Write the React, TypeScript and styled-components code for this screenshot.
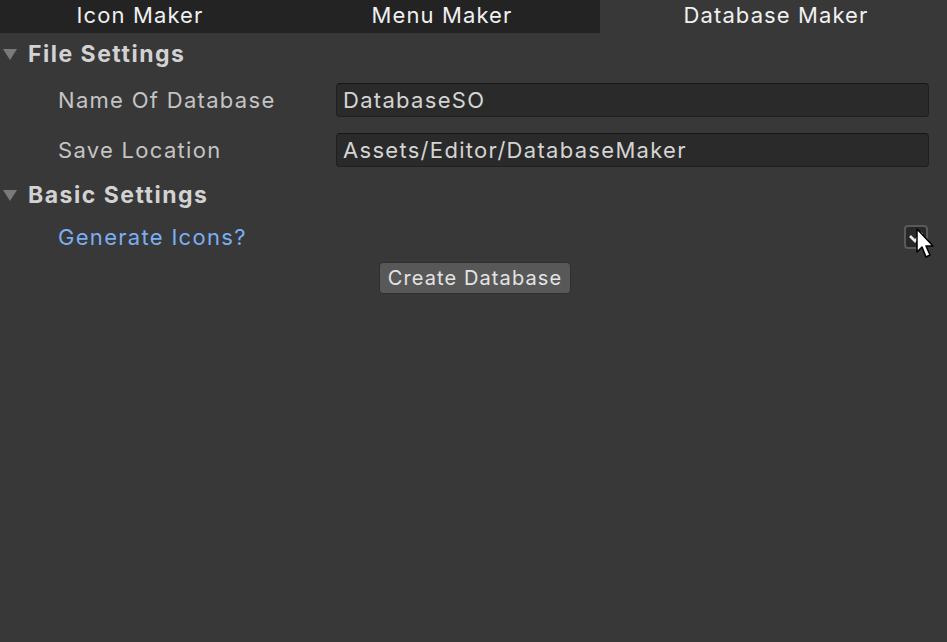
import styled, {createGlobalStyle} from "styled-components";

const Global = createGlobalStyle`
body {
    margin: 0;
    background-color: #383838;
    font-family: Inter, 'Noto Sans', sans-serif;
}
`

const Page = styled.div`
width: 947px;
height: 642px;
background-color: #383838;
position: relative;
overflow: hidden;
`

const Tabs = styled.div`
display: grid;
grid-template-columns: 300px 300px 1fr;
height: 33px;
`

const Tab = styled.div<{ $active?: boolean; $shift?: number }>`
display: flex;
align-items: center;
justify-content: center;
background-color: ${p => p.$active ? '#383838' : '#232323'};
color: #f0f0f0;
font-size: 22px;
letter-spacing: 1.1px;
padding-bottom: 4px;
padding-left: ${p => p.$shift && p.$shift > 0 ? p.$shift : 0}px;
padding-right: ${p => p.$shift && p.$shift < 0 ? -p.$shift : 0}px;
box-sizing: border-box;
`

const Section = styled.div`
display: flex;
align-items: center;
height: 40px;
padding-left: 3px;
margin-top: 1px;
color: #d2d2d2;
font-size: 23px;
font-weight: 700;
letter-spacing: 1.5px;
`

const Arrow = styled.span`
width: 0;
height: 0;
border-left: 7px solid transparent;
border-right: 7px solid transparent;
border-top: 11px solid #7a7a7a;
margin-right: 11px;
`

const Row = styled.div`
display: grid;
grid-template-columns: 278px 593px;
align-items: center;
padding-left: 58px;
height: 50px;
padding-top: 2px;
box-sizing: border-box;
`

const Label = styled.span<{ $blue?: boolean }>`
color: ${p => p.$blue ? '#7baef2' : '#c4c4c4'};
font-size: 22px;
letter-spacing: 1.3px;
`

const Field = styled.div`
height: 34px;
box-sizing: border-box;
background-color: #2a2a2a;
border: 1px solid #1f1f1f;
border-top-color: #161616;
border-radius: 4px;
color: #d4d4d4;
font-size: 22px;
letter-spacing: 1.3px;
display: flex;
align-items: center;
padding-left: 6px;
`

const CheckRow = styled.div`
display: flex;
align-items: center;
justify-content: space-between;
padding-left: 58px;
padding-right: 19px;
margin-top: 3px;
height: 38px;
`

const Check = styled.div`
width: 24px;
height: 24px;
box-sizing: border-box;
border: 2px solid #5a5a5a;
border-radius: 4px;
background-color: #282828;
display: flex;
align-items: center;
justify-content: center;
`

const Actions = styled.div`
display: flex;
padding-left: 379px;
margin-top: 6px;
`

const Button = styled.div`
width: 192px;
height: 32px;
box-sizing: border-box;
background-color: #585858;
border: 1px solid #2f2f2f;
border-radius: 4px;
color: #e4e4e4;
font-size: 20px;
letter-spacing: 1.1px;
display: flex;
align-items: center;
justify-content: center;
`

const Cursor = styled.svg`
position: absolute;
left: 916px;
top: 228px;
`

export default function App() {
    return (
        <Page>
            <Global/>
            <Tabs>
                <Tab $shift={-20}>Icon Maker</Tab>
                <Tab $shift={-16}>Menu Maker</Tab>
                <Tab $active $shift={5}>Database Maker</Tab>
            </Tabs>
            <Section><Arrow/>File Settings</Section>
            <Row>
                <Label>Name Of Database</Label>
                <Field>DatabaseSO</Field>
            </Row>
            <Row>
                <Label>Save Location</Label>
                <Field>Assets/Editor/DatabaseMaker</Field>
            </Row>
            <Section><Arrow/>Basic Settings</Section>
            <CheckRow>
                <Label $blue>Generate Icons?</Label>
                <Check>
                    <svg width="16" height="12" viewBox="0 0 16 12">
                        <path d="M2 5 L7 10 L14 2" stroke="#e8e8e8" strokeWidth="2.6" fill="none"/>
                    </svg>
                </Check>
            </CheckRow>
            <Actions>
                <Button>Create Database</Button>
            </Actions>
            <Cursor width="20" height="32" viewBox="0 0 20 32">
                <path d="M1 1 L1 24 L6 19 L10 29 L14 27 L10 18 L17 18 Z" fill="#ffffff" stroke="#000000" strokeWidth="1.5" strokeLinejoin="round"/>
            </Cursor>
        </Page>
    )
}
